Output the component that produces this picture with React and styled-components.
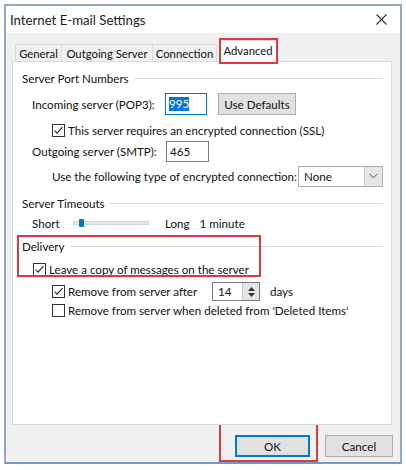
import React from "react";
import styled, { createGlobalStyle } from "styled-components";

const Global = createGlobalStyle`
  html, body { margin: 0; padding: 0; background: #fff; }
  body {
    font-family: Lato, "Noto Sans", sans-serif;
    font-size: 11.6px;
    color: #111;
  }
  * { box-sizing: border-box; }
`;

const RED = "#e0393b";

const Window = styled.div`
  margin: 4px 0 0 4px;
  width: 398px;
  height: 460px;
  border: 2px solid #93a8c3;
  border-bottom-color: #6f9bd0;
  background: #f0f0f0;
  display: flex;
  flex-direction: column;
`;

const TitleBar = styled.div`
  height: 27px;
  flex: none;
  background: #fff;
  display: flex;
  align-items: center;
  justify-content: space-between;
  padding: 0 13px 0 4px;
`;

const Title = styled.div`
  font-size: 13.2px;
  color: #1a1a1a;
`;

const Body = styled.div`
  flex: 1;
  display: flex;
  flex-direction: column;
  padding: 8px 8px 0 6px;
`;

const TabList = styled.div`
  display: flex;
  align-items: flex-end;
  height: 21px;
  padding-left: 4px;
  margin-bottom: -1px;
  position: relative;
  z-index: 2;
  font-size: 11.3px;
`;

const Tab = styled.div`
  position: relative;
  width: ${(p) => p.$w}px;
  justify-content: center;
  height: ${(p) => (p.$active ? 22 : 18)}px;
  margin-left: ${(p) => (p.$active ? 2 : -1)}px;
  border: 1px solid #d9d9d9;
  border-bottom: ${(p) => (p.$active ? "none" : "1px solid #d9d9d9")};
  background: ${(p) => (p.$active ? "#fff" : "#f0f0f0")};
  display: flex;
  align-items: center;
  padding-bottom: ${(p) => (p.$active ? 3 : 0)}px;
  white-space: nowrap;
  &::after {
    content: "";
    display: ${(p) => (p.$marked ? "block" : "none")};
    position: absolute;
    left: -1px;
    right: -2px;
    top: -3px;
    bottom: -2px;
    border: 2px solid ${RED};
    pointer-events: none;
  }
`;

const Panel = styled.div`
  height: 364px;
  flex: none;
  background: #fff;
  border: 1px solid #d9d9d9;
  position: relative;
  z-index: 1;
  display: flex;
  flex-direction: column;
`;

const Row = styled.div`
  display: flex;
  align-items: center;
  height: ${(p) => p.$h}px;
  margin-top: ${(p) => p.$mt}px;
  padding-left: ${(p) => p.$indent}px;
  white-space: nowrap;
`;

const GroupHeader = styled(Row)`
  padding-right: 8px;
  &::after {
    content: "";
    flex: 1;
    height: 1px;
    background: #dcdcdc;
    margin-left: 5px;
  }
`;

const Label = styled.span`
  width: ${(p) => (p.$w ? `${p.$w}px` : "auto")};
  flex: none;
`;

const TextBox = styled.div`
  width: ${(p) => p.$w}px;
  height: ${(p) => p.$h}px;
  border: 1px solid ${(p) => (p.$focus ? "#0078d7" : "#7a7a7a")};
  background: #fff;
  display: flex;
  align-items: center;
  padding-left: 3px;
  flex: none;
`;

const Selected = styled.span`
  background: #0078d7;
  color: #fff;
  line-height: 14px;
`;

const Button = styled.div`
  width: ${(p) => p.$w}px;
  height: ${(p) => p.$h}px;
  margin-left: ${(p) => p.$ml || 0}px;
  background: #e1e1e1;
  border: ${(p) => (p.$default ? "2px solid #0078d7" : "1px solid #adadad")};
  display: flex;
  align-items: center;
  justify-content: center;
  flex: none;
  position: relative;
  &::after {
    content: "";
    display: ${(p) => (p.$marked ? "block" : "none")};
    position: absolute;
    left: -18px;
    right: -10px;
    top: -18px;
    bottom: -7px;
    border: 2px solid ${RED};
  }
`;

const CheckWrap = styled.span`
  width: 13px;
  height: 13px;
  flex: none;
  margin-right: 3px;
  display: inline-flex;
`;

const Check = ({ on }) => (
  <CheckWrap>
    <svg width="13" height="13" viewBox="0 0 13 13">
      <rect x="0.5" y="0.5" width="12" height="12" fill="#fff" stroke="#333" />
      {on && (
        <polyline
          points="2.5,6.5 5,9.2 10.5,3.2"
          fill="none"
          stroke="#222"
          strokeWidth="1.1"
        />
      )}
    </svg>
  </CheckWrap>
);

const SelectBox = styled.div`
  width: ${(p) => p.$w}px;
  height: 21px;
  border: 1px solid #adadad;
  background: #fff;
  display: flex;
  align-items: center;
  padding-left: 5px;
  flex: none;
`;

const SelectText = styled.span`
  flex: 1;
`;

const DropBtn = styled.span`
  width: 18px;
  height: 19px;
  background: #e5e5e5;
  border-left: 1px solid #c8c8c8;
  display: flex;
  align-items: center;
  justify-content: center;
`;

const Track = styled.div`
  position: relative;
  width: 76px;
  height: 4px;
  margin-right: 16px;
  background: #e7e7e7;
  border: 1px solid #d6d6d6;
  flex: none;
`;

const Thumb = styled.span`
  position: absolute;
  left: 5px;
  top: -3px;
  width: 5px;
  height: 8px;
  background: #0078d7;
  border-radius: 1px;
`;

const Spin = styled.div`
  width: 48px;
  height: 19px;
  border: 1px solid #7a7a7a;
  background: #fff;
  display: flex;
  align-items: stretch;
  flex: none;
`;

const SpinText = styled.span`
  flex: 1;
  padding-left: 5px;
  display: flex;
  align-items: center;
`;

const SpinBtns = styled.span`
  width: 17px;
  background: #e5e5e5;
  border-left: 1px solid #c8c8c8;
  display: flex;
  flex-direction: column;
  align-items: center;
  justify-content: center;
  gap: 2px;
`;

const Highlight = styled.div`
  position: relative;
  display: flex;
  flex-direction: column;
  &::after {
    content: "";
    position: absolute;
    left: 4px;
    width: 240px;
    top: 4px;
    bottom: 0px;
    border: 2px solid ${RED};
    pointer-events: none;
  }
`;

const Footer = styled.div`
  display: flex;
  justify-content: flex-end;
  margin-top: 10px;
  margin-right: -1px;
`;

const Gap = styled.span`
  width: ${(p) => p.$w}px;
  flex: none;
`;

export default function App() {
  return (
    <>
      <Global />
      <Window>
        <TitleBar>
          <Title>Internet E-mail Settings</Title>
          <svg width="11" height="11" viewBox="0 0 11 11">
            <path d="M0.5 0.5 L10.5 10.5 M10.5 0.5 L0.5 10.5" stroke="#333" strokeWidth="1.1" />
          </svg>
        </TitleBar>
        <Body>
          <TabList>
            <Tab $w={47}>General</Tab>
            <Tab $w={92}>Outgoing Server</Tab>
            <Tab $w={65}>Connection</Tab>
            <Tab $w={58} $active $marked>Advanced</Tab>
          </TabList>
          <Panel>
            <GroupHeader $h={18} $mt={7} $indent={9}>Server Port Numbers</GroupHeader>
            <Row $h={22} $mt={6} $indent={19}>
              <Label $w={133}>Incoming server (POP3):</Label>
              <TextBox $w={42} $h={22} $focus><Selected>995</Selected></TextBox>
              <Gap $w={11} />
              <Button $w={78} $h={22}>Use Defaults</Button>
            </Row>
            <Row $h={16} $mt={7} $indent={39}>
              <Check on />
              <span>This server requires an encrypted connection (SSL)</span>
            </Row>
            <Row $h={21} $mt={3} $indent={19}>
              <Label $w={134}>Outgoing server (SMTP):</Label>
              <TextBox $w={43} $h={21}>465</TextBox>
            </Row>
            <Row $h={20} $mt={4} $indent={39}>
              <Label $w={246}>Use the following type of encrypted connection:</Label>
              <SelectBox $w={85}>
                <SelectText>None</SelectText>
                <DropBtn>
                  <svg width="9" height="6" viewBox="0 0 9 6">
                    <polyline points="0.5,0.8 4.5,4.8 8.5,0.8" fill="none" stroke="#555" />
                  </svg>
                </DropBtn>
              </SelectBox>
            </Row>
            <GroupHeader $h={18} $mt={8} $indent={9}>Server Timeouts</GroupHeader>
            <Row $h={16} $mt={3} $indent={19}>
              <Label $w={41}>Short</Label>
              <Track><Thumb /></Track>
              <span>Long</span>
              <Gap $w={10} />
              <span>1 minute</span>
            </Row>
            <Highlight>
              <GroupHeader $h={18} $mt={6} $indent={9}>Delivery</GroupHeader>
              <Row $h={16} $mt={6} $indent={20}>
                <Check on />
                <span>Leave a copy of messages on the server</span>
              </Row>
            </Highlight>
            <Row $h={19} $mt={5} $indent={39}>
              <Check on />
              <Label $w={144}>Remove from server after</Label>
              <Spin>
                <SpinText>14</SpinText>
                <SpinBtns>
                  <svg width="7" height="4" viewBox="0 0 7 4"><polygon points="0,4 3.5,0 7,4" fill="#333" /></svg>
                  <svg width="7" height="4" viewBox="0 0 7 4"><polygon points="0,0 3.5,4 7,0" fill="#333" /></svg>
                </SpinBtns>
              </Spin>
              <Gap $w={10} />
              <span>days</span>
            </Row>
            <Row $h={16} $mt={1} $indent={39}>
              <Check />
              <span>Remove from server when deleted from 'Deleted Items'</span>
            </Row>
          </Panel>
          <Footer>
            <Button $w={75} $h={22} $default $marked>OK</Button>
            <Button $w={68} $h={22} $ml={15}>Cancel</Button>
          </Footer>
        </Body>
      </Window>
    </>
  );
}
